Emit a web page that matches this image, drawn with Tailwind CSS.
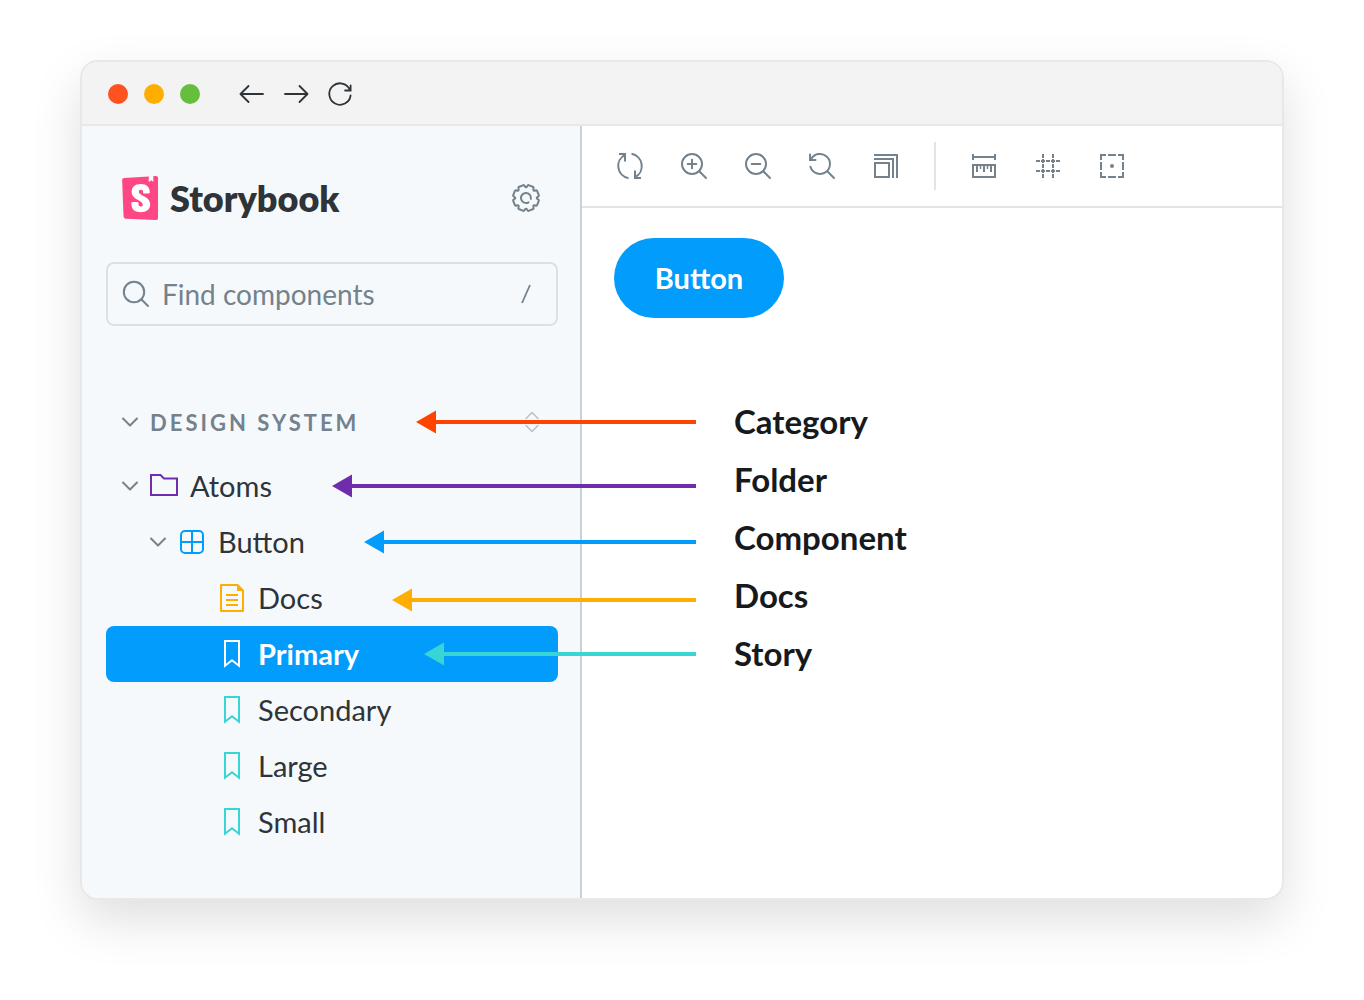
<!DOCTYPE html>
<html lang="en">
<head>
<meta charset="utf-8">
<meta name="viewport" content="width=device-width, initial-scale=1">
<title>Storybook</title>
<script src="https://cdn.jsdelivr.net/npm/@tailwindcss/browser@4"></script>
</head>
<body class="bg-white font-['Lato',sans-serif] text-[#2e3438]">
<div class="px-20 pt-15 pb-25">
  <div class="overflow-hidden rounded-[18px] border-2 border-[#e8e8e8] bg-white shadow-[0_20px_50px_rgba(0,0,0,0.13)]">

    <header class="flex h-16 items-center border-b-2 border-[#e8e8e8] bg-[#f3f3f3] pt-0.5 pl-[26px]">
      <div class="flex gap-4">
        <span class="size-5 rounded-full bg-[#ff521f]"></span>
        <span class="size-5 rounded-full bg-[#ffae00]"></span>
        <span class="size-5 rounded-full bg-[#66bf3c]"></span>
      </div>
      <nav class="ml-[38px] flex gap-4" aria-label="Browser">
        <button aria-label="Back"><svg class="size-7" viewBox="0 0 28 28" fill="none" stroke="#2e3438" stroke-width="1.8" stroke-linecap="round" stroke-linejoin="round"><path d="M25 14H3M10.500 6l-8 8 8 8"/></svg></button>
        <button aria-label="Forward"><svg class="size-7" viewBox="0 0 28 28" fill="none" stroke="#2e3438" stroke-width="1.8" stroke-linecap="round" stroke-linejoin="round"><path d="M3 14h22M17.500 6l8 8-8 8"/></svg></button>
        <button aria-label="Reload"><svg class="size-7" viewBox="0 0 28 28" fill="none" stroke="#2e3438" stroke-width="1.8" stroke-linecap="round"><path d="M24.6 15.500A10.700 10.700 0 1 1 23.800 9.700M24.600 5.500v5h-5.500"/></svg></button>
      </nav>
    </header>

    <div class="relative flex">
      <aside class="w-[500px] shrink-0 border-r-2 border-[#c9d1d5] bg-[#f6f9fc] pt-11 pr-[22px] pb-12 pl-6">
        <div class="flex h-14 items-center px-4">
          <svg class="h-11 w-9" viewBox="2.3 0 19.3 24" preserveAspectRatio="none" fill="#ff4785"><rect x="6" y="3" width="13" height="18" fill="#fff"/><path d="M16.71.243l-.12 2.71a.18.18 0 00.29.15l1.06-.8.9.7a.18.18 0 00.28-.14l-.1-2.76 1.33-.1a1.2 1.2 0 011.279 1.2v21.596a1.2 1.2 0 01-1.26 1.2l-16.096-.72a1.2 1.2 0 01-1.15-1.16l-.75-19.797a1.2 1.2 0 011.13-1.27L16.7.222zM13.64 9.3c0 .47 3.16.24 3.59-.08 0-3.2-1.72-4.89-4.859-4.89-3.15 0-4.899 1.72-4.899 4.29 0 4.45 5.999 4.53 5.999 6.959 0 .7-.32 1.1-1.05 1.1-.96 0-1.35-.49-1.3-2.16 0-.36-3.649-.48-3.769 0-.27 4.03 2.23 5.2 5.099 5.2 2.79 0 4.969-1.49 4.969-4.18 0-4.77-6.099-4.64-6.099-6.999 0-.97.72-1.1 1.13-1.1.45 0 1.25.07 1.19 1.87z"/></svg>
          <h1 class="ml-3 text-4xl font-extrabold">Storybook</h1>
          <button class="ml-auto" aria-label="Settings">
            <svg class="size-8" viewBox="-2 -2 32 32" fill="none" stroke="#73828c" stroke-width="2" stroke-linecap="round" stroke-linejoin="round">
              <defs><path id="tooth" d="M14 3.200C15.800 3.200 14.800 1 16.600 1.100L21.280 3.040C22.630 4.250 20.360 5.090 21.640 6.360"/></defs>
              <use href="#tooth"/><use href="#tooth" transform="rotate(45 14 14)"/><use href="#tooth" transform="rotate(90 14 14)"/><use href="#tooth" transform="rotate(135 14 14)"/><use href="#tooth" transform="rotate(180 14 14)"/><use href="#tooth" transform="rotate(225 14 14)"/><use href="#tooth" transform="rotate(270 14 14)"/><use href="#tooth" transform="rotate(315 14 14)"/>
              <path d="M16.500 18.300A5 5 0 1 1 18.900 14.800"/>
            </svg>
          </button>
        </div>

        <label class="mt-9 flex h-16 items-center gap-3 rounded-lg border-2 border-[#d9e1e7] pr-[25px] pl-3.5 text-[#73828c]">
          <svg class="size-7 shrink-0" viewBox="0 0 28 28" fill="none" stroke="currentColor" stroke-width="2" stroke-linecap="round"><circle cx="12" cy="12" r="10.200"/><path d="M19.500 19.500l6.500 6.500"/></svg>
          <input type="text" aria-label="Find components" placeholder="Find components" class="min-w-0 flex-1 bg-transparent text-[28px] outline-none placeholder:text-[#73828c]">
          <svg class="h-5 w-2.5" viewBox="0 0 10 20" fill="none" stroke="currentColor" stroke-width="1.800"><path d="M9 1L1 19"/></svg>
        </label>

        <div class="mt-[68px] flex h-14 items-center pr-4 pl-4 text-[#73828c]">
          <button class="flex items-center gap-3 text-[22px] font-bold tracking-[3px]" aria-expanded="true">
            <svg class="h-4 w-4" viewBox="0 0 16 16" fill="none" stroke="currentColor" stroke-width="2" stroke-linecap="round" stroke-linejoin="round"><path d="M1 4.500l7 7 7-7"/></svg>
            DESIGN SYSTEM
          </button>
          <button class="ml-auto" aria-label="Expand all"><svg class="h-6 w-5" viewBox="0 0 20 24" fill="none" stroke="#b9bfc4" stroke-width="1.500" stroke-linecap="round" stroke-linejoin="round"><path d="M4 8.500l6-6 6 6M4 15.500l6 6 6-6"/></svg></button>
        </div>

        <ul class="mt-2 text-[29px]">
          <li><button class="flex h-14 w-full items-center gap-3 pl-4" aria-expanded="true">
            <svg class="h-4 w-4" viewBox="0 0 16 16" fill="none" stroke="#73828c" stroke-width="2" stroke-linecap="round" stroke-linejoin="round"><path d="M1 4.500l7 7 7-7"/></svg>
            <svg class="size-7" viewBox="0 0 28 28" fill="none" stroke="#6f2cac" stroke-width="2"><path d="M1 3h9.500l3.500 3.500h13V23H1z"/></svg>
            Atoms</button></li>
          <li><button class="flex h-14 w-full items-center gap-3.5 pl-11" aria-expanded="true">
            <svg class="h-4 w-4" viewBox="0 0 16 16" fill="none" stroke="#73828c" stroke-width="2" stroke-linecap="round" stroke-linejoin="round"><path d="M1 4.500l7 7 7-7"/></svg>
            <svg class="size-6" viewBox="0 0 24 24" fill="none" stroke="#029cfd" stroke-width="2"><rect x="1" y="1" width="22" height="22" rx="4"/><path d="M12 1v22M1 12h22"/></svg>
            Button</button></li>
          <li><button class="flex h-14 w-full items-center gap-3.5 pl-[114px]">
            <svg class="h-7 w-6" viewBox="0 0 24 28" fill="none" stroke="#ffae00" stroke-width="2" stroke-linejoin="round"><path d="M1 1h16.500L23 6.500V27H1z"/><path d="M17 1v6h6v-.5L17.500 1z" fill="#ffae00" stroke="none"/><path d="M6 11h12M6 16h12M6 21h12"/></svg>
            Docs</button></li>
          <li><button class="flex h-14 w-full items-center gap-3.5 rounded-lg bg-[#029cfd] pl-[114px] font-bold text-white" aria-current="page">
            <svg class="h-7 w-6" viewBox="0 0 24 28" fill="none" stroke="#fff" stroke-width="2"><path d="M5 1h14v24.800l-7-5.500-7 5.500z"/></svg>
            Primary</button></li>
          <li><button class="flex h-14 w-full items-center gap-3.5 pl-[114px]">
            <svg class="h-7 w-6" viewBox="0 0 24 28" fill="none" stroke="#37d5d3" stroke-width="2"><path d="M5 1h14v24.800l-7-5.500-7 5.500z"/></svg>
            Secondary</button></li>
          <li><button class="flex h-14 w-full items-center gap-3.5 pl-[114px]">
            <svg class="h-7 w-6" viewBox="0 0 24 28" fill="none" stroke="#37d5d3" stroke-width="2"><path d="M5 1h14v24.800l-7-5.500-7 5.500z"/></svg>
            Large</button></li>
          <li><button class="flex h-14 w-full items-center gap-3.5 pl-[114px]">
            <svg class="h-7 w-6" viewBox="0 0 24 28" fill="none" stroke="#37d5d3" stroke-width="2"><path d="M5 1h14v24.800l-7-5.500-7 5.500z"/></svg>
            Small</button></li>
        </ul>
      </aside>

      <main class="min-w-0 flex-1">
        <div class="flex h-[82px] items-center gap-9 border-b-2 border-[#dfe5e9] pl-[34px] text-[#73828c]" role="toolbar" aria-label="Canvas tools">
          <button aria-label="Remount"><svg class="size-7" viewBox="0 0 28 28" fill="none" stroke="currentColor" stroke-width="2"><path d="M3 2h6v7.500M9 2.800A12.500 12.500 0 0 0 12.500 26.200M15.500 1.800A12.500 12.500 0 0 1 19 25.200M25 26h-6v-7.500"/></svg></button>
          <button aria-label="Zoom in"><svg class="size-7" viewBox="0 0 28 28" fill="none" stroke="currentColor" stroke-width="2" stroke-linecap="round"><circle cx="12" cy="12" r="10"/><path d="M19.500 19.500l6.500 6.500"/><path d="M7 12h10M12 7v10" stroke-linecap="butt"/></svg></button>
          <button aria-label="Zoom out"><svg class="size-7" viewBox="0 0 28 28" fill="none" stroke="currentColor" stroke-width="2" stroke-linecap="round"><circle cx="12" cy="12" r="10"/><path d="M19.500 19.500l6.500 6.500"/><path d="M7 12h10" stroke-linecap="butt"/></svg></button>
          <button aria-label="Reset zoom"><svg class="size-7" viewBox="0 0 28 28" fill="none" stroke="currentColor" stroke-width="2" stroke-linecap="round"><path d="M2.400 14.800A10 10 0 1 0 3 7.500M2 2.500V8h5.500M19.500 19.500l6.500 6.500"/></svg></button>
          <button aria-label="Viewport"><svg class="size-7" viewBox="0 0 28 28" fill="none" stroke="currentColor" stroke-width="2"><path d="M2 3h23v23M2 7h19v19M3 11h14v14H3z"/></svg></button>
          <span class="-mx-0.5 h-12 w-0.5 bg-[#dfe5e9]"></span>
          <button aria-label="Measure"><svg class="size-7" viewBox="0 0 28 28" fill="none" stroke="currentColor" stroke-width="2"><path d="M3 2v6M25 2v6M3 5h22M3 13h22v12H3zM7 13v7M14 13v7M21 13v7"/><path d="M10.500 13v4M17.500 13v4" stroke-width="1.500"/></svg></button>
          <button aria-label="Grid"><svg class="size-7" viewBox="0 0 28 28" fill="none" stroke="currentColor" stroke-width="2" stroke-dasharray="4 1"><path d="M9 2v24M19 2v24M2 9h24M2 19h24"/></svg></button>
          <button aria-label="Outline"><svg class="size-7" viewBox="0 0 28 28" fill="none" stroke="currentColor" stroke-width="2"><path d="M8 3H3v5M20 3h5v5M8 25H3v-5M20 25h5v-5M10 3h8M10 25h8M3 10v8M25 10v8"/><circle cx="14" cy="14" r="2" fill="currentColor" stroke="none"/></svg></button>
        </div>
        <div class="px-8 pt-[30px]">
          <button class="h-20 w-[170px] rounded-full bg-[#029cfd] text-[29px] font-bold text-white">Button</button>
        </div>
        <ul class="mt-[74px] pl-[152px] text-[33px] leading-[58px] font-bold text-[#171a1c]">
          <li>Category</li>
          <li>Folder</li>
          <li>Component</li>
          <li>Docs</li>
          <li>Story</li>
        </ul>
      </main>

      <svg class="pointer-events-none absolute top-[270px] left-[250px] h-[280px] w-[364px]" viewBox="0 0 364 280" aria-hidden="true">
        <path fill="#ff4400" d="M84 26l20-11.500V24h260v4H104v9.500z"/>
        <path fill="#6f2cac" d="M0 90l20-11.500V88h344v4H20v9.500z"/>
        <path fill="#029cfd" d="M32 146l20-11.500V144h312v4H52v9.500z"/>
        <path fill="#ffae00" d="M60 204l20-11.500V202h284v4H80v9.500z"/>
        <path fill="#37d5d3" d="M92 258l20-11.500V256h252v4H112v9.500z"/>
      </svg>
    </div>
  </div>
</div>
</body>
</html>
